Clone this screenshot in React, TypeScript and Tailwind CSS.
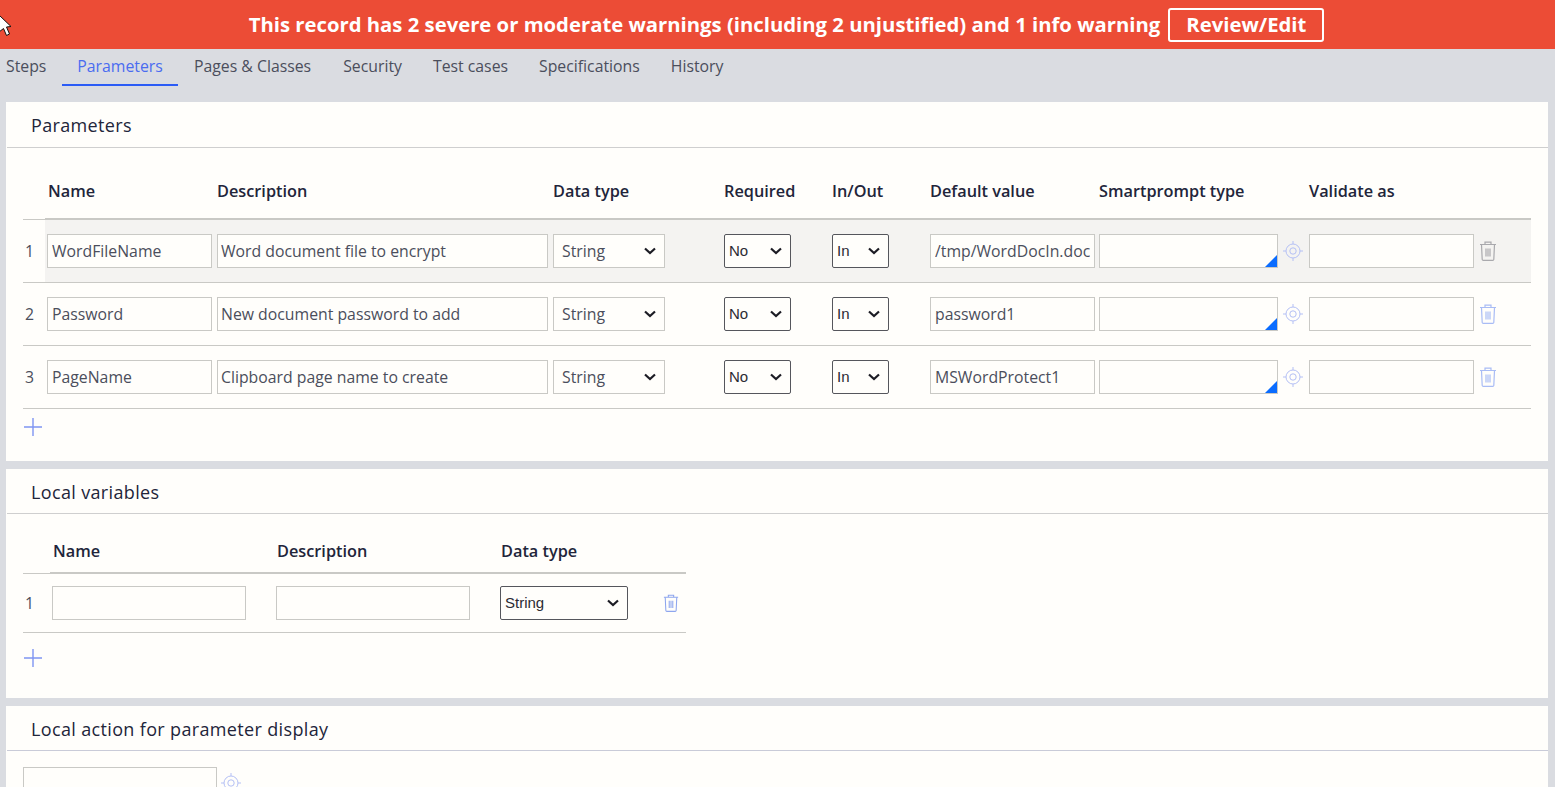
const TABS = ["Steps", "Parameters", "Pages & Classes", "Security", "Test cases", "Specifications", "History"];

const PARAMS = [
  { name: "WordFileName", description: "Word document file to encrypt", value: "/tmp/WordDocIn.doc" },
  { name: "Password", description: "New document password to add", value: "password1" },
  { name: "PageName", description: "Clipboard page name to create", value: "MSWordProtect1" },
];

const FONT = "font-['Open_Sans',sans-serif]";
const INPUT =
  "h-[34px] border border-[#c9c9c5] bg-[#fffefb] pr-[4px] text-[15.8px] text-[#4b4e5c] outline-none";

function Chevron() {
  return (
    <svg width="12" height="8" viewBox="0 0 12 8" fill="none" className="pointer-events-none absolute top-[13px] right-[9px]">
      <path d="M1 1.5 L6 6 L11 1.5" stroke="#1c1c24" strokeWidth="2.2" />
    </svg>
  );
}

/** Pale grey-bordered select used by the data type column. */
function SoftSelect({ w }: { w: string }) {
  return (
    <div className={`relative h-[34px] ${w}`}>
      <select
        defaultValue="String"
        className="h-full w-full appearance-none border border-[#c9c9c5] bg-[#fffefb] pt-[1px] pl-[8px] text-[15.8px] text-[#4b4e5c] outline-none"
      >
        <option>String</option>
      </select>
      <Chevron />
    </div>
  );
}

/** Dark-bordered select, drawn in Arial metrics like the original. */
function HardSelect({ w, value }: { w: string; value: string }) {
  return (
    <div className={`relative h-[34px] ${w}`}>
      <select
        defaultValue={value}
        className="h-full w-full appearance-none rounded-[2px] border border-[#55565c] bg-[#fffefb] pl-[4px] font-['Liberation_Sans',sans-serif] text-[15px] text-[#2b2b33] outline-none"
      >
        <option>{value}</option>
      </select>
      <Chevron />
    </div>
  );
}

function Target({ size = 20 }: { size?: number }) {
  return (
    <svg width={size} height={size} viewBox="0 0 20 20" fill="none" stroke="#b4c0f5" strokeWidth="1">
      <circle cx="10" cy="10" r="7" />
      <circle cx="10" cy="10" r="3.2" />
      <path d="M10 0v3M10 17v3M0 10h3M17 10h3" />
    </svg>
  );
}

function Trash({ color = "#a9bcf5", w = 18, h = 20 }: { color?: string; w?: number; h?: number }) {
  return (
    <svg width={w} height={h} viewBox="0 0 18 20" fill="none" stroke={color} strokeWidth="1.2">
      <path d="M1 3.5h16M6 3.5V1.2h6v2.3" />
      <path d="M2.5 3.5 L3.2 18.5 Q3.3 19.4 4.2 19.4 H13.8 Q14.7 19.4 14.8 18.5 L15.5 3.5" />
      <path d="M7 7.5v8M9 7.5v8M11 7.5v8" />
    </svg>
  );
}

function Plus() {
  return (
    <svg width="18" height="18" viewBox="0 0 18 18" stroke="#7f95f2" strokeWidth="1.4">
      <path d="M9 0v18M0 9h18" />
    </svg>
  );
}

function Card({ title, hClass, children }: { title: string; hClass: string; children: React.ReactNode }) {
  return (
    <section className="mx-[6px] w-[1542px] shrink-0 bg-[#fffefb]">
      <div className={`ml-[1px] flex items-center border-b pt-[2px] pl-[24px] text-[18px] tracking-[0.35px] text-[#22253a] ${hClass}`}>
        {title}
      </div>
      {children}
    </section>
  );
}

function ParamHeader() {
  return (
    <div className="mx-[17px] flex">
      <div className="w-[22px] border-b border-[#c9c9c5]" />
      <div className="grid h-[72px] flex-1 grid-cols-[170px_336px_171px_108px_98px_169px_210px_1fr] items-end border-b-2 border-[#c9c9c5] pb-[17px] pl-[2px] text-[16.3px] leading-[20px] font-semibold text-[#22253a]">
        <span className="pl-[1px]">Name</span>
        <span>Description</span>
        <span>Data type</span>
        <span>Required</span>
        <span>In/Out</span>
        <span>Default value</span>
        <span>Smartprompt type</span>
        <span>Validate as</span>
      </div>
    </div>
  );
}

function ParamRow({ index, row, active }: { index: number; row: (typeof PARAMS)[number]; active: boolean }) {
  return (
    <div className="mx-[17px] flex h-[63px] border-b border-[#c9c9c5]">
      <div className="flex w-[22px] items-center pt-[1px] pl-[2px] text-[15.8px] text-[#4b4e5c]">{index}</div>
      <div
        className={`grid flex-1 grid-cols-[170px_336px_171px_108px_98px_169px_184px_26px_170px_1fr] items-center pl-[2px] ${
          active ? "bg-[#f4f3f1]" : ""
        }`}
      >
        <input readOnly defaultValue={row.name} className={`${INPUT} w-[165px] pl-[4px]`} />
        <input readOnly defaultValue={row.description} className={`${INPUT} w-[331px] pl-[3px]`} />
        <SoftSelect w="w-[112px]" />
        <HardSelect w="w-[67px]" value="No" />
        <HardSelect w="w-[57px]" value="In" />
        <input readOnly defaultValue={row.value} className={`${INPUT} w-[165px] pl-[4px]`} />
        <div className="relative h-[34px] w-[179px] border border-[#c9c9c5] bg-[#fffefb]">
          <svg width="12" height="12" viewBox="0 0 12 12" className="absolute right-0 bottom-0">
            <path d="M12 0V12H0Z" fill="#0a6cff" />
          </svg>
        </div>
        <Target />
        <input readOnly className={`${INPUT} w-[165px]`} />
        <Trash color={active ? "#a9a9ad" : "#a9bcf5"} />
      </div>
    </div>
  );
}

export default function App() {
  return (
    <div className={`relative flex h-[787px] w-[1555px] flex-col overflow-hidden bg-[#dadce1] ${FONT}`}>
      {/* Warning banner */}
      <div className="flex h-[49px] shrink-0 items-center justify-center gap-[8px] bg-[#ec4c36] pl-[18px] text-[20.3px] font-bold text-white">
        <span>This record has 2 severe or moderate warnings (including 2 unjustified) and 1 info warning</span>
        <span className="flex h-[34px] w-[156px] items-center justify-center rounded-[3px] border-2 border-white">Review/Edit</span>
      </div>

      {/* Tabs */}
      <div className="flex h-[37px] shrink-0 items-start text-[15.8px] leading-[34px] text-[#4b4e5c]">
        <span className="ml-[6px] w-[56px]">Steps</span>
        <span className="h-[37px] w-[116px] border-b-2 border-[#2b5cf6] text-center text-[#4a6cf0]">{TABS[1]}</span>
        <span className="ml-[16px]">{TABS[2]}</span>
        <span className="ml-[32px]">{TABS[3]}</span>
        <span className="ml-[31px]">{TABS[4]}</span>
        <span className="ml-[31px]">{TABS[5]}</span>
        <span className="ml-[31px]">{TABS[6]}</span>
      </div>

      <div className="mt-[16px] flex flex-col gap-[8px]">
        <Card title="Parameters" hClass="h-[46px] border-[#cfcfcf]">
          <ParamHeader />
          {PARAMS.map((row, i) => (
            <ParamRow key={row.name} index={i + 1} row={row} active={i === 0} />
          ))}
          <div className="ml-[18px] h-[52px] pt-[9px]">
            <Plus />
          </div>
        </Card>

        <Card title="Local variables" hClass="h-[45px] border-[#cfcfcf]">
          <div className="ml-[17px] w-[663px]">
            <div className="flex">
              <div className="w-[27px] border-b border-[#c9c9c5]" />
              <div className="grid h-[60px] flex-1 grid-cols-[224px_224px_1fr] items-end border-b-2 border-[#c9c9c5] pb-[11px] pl-[3px] text-[16.3px] leading-[20px] font-semibold text-[#22253a]">
                <span>Name</span>
                <span>Description</span>
                <span>Data type</span>
              </div>
            </div>
            <div className="flex h-[59px] items-center border-b border-[#c9c9c5]">
              <span className="w-[29px] pt-[1px] pl-[2px] text-[15.8px] text-[#4b4e5c]">1</span>
              <input readOnly className={`${INPUT} w-[194px]`} />
              <input readOnly className={`${INPUT} ml-[30px] w-[194px]`} />
              <div className="ml-[30px]">
                <HardSelect w="w-[128px]" value="String" />
              </div>
              <div className="ml-[35px] flex">
                <Trash color="#8ea6ee" w={16} h={18} />
              </div>
            </div>
          </div>
          <div className="ml-[18px] h-[65px] pt-[16px]">
            <Plus />
          </div>
        </Card>

        <Card title="Local action for parameter display" hClass="h-[45px] border-[#c9cbd8]">
          <div className="ml-[17px] flex items-start gap-[4px] pt-[16px]">
            <input readOnly className={`${INPUT} w-[194px]`} />
            <div className="pt-[6px]">
              <Target />
            </div>
          </div>
        </Card>
      </div>

      {/* Captured mouse pointer */}
      <svg width="12" height="22" viewBox="0 0 12 22" className="absolute top-[15px] left-0">
        <path d="M-1 0 L11 11.5 L6.5 12 L9.5 19 L6.5 20.5 L3.5 13.5 L-1 17Z" fill="#ffffff" stroke="#111111" strokeWidth="1" />
      </svg>
    </div>
  );
}
